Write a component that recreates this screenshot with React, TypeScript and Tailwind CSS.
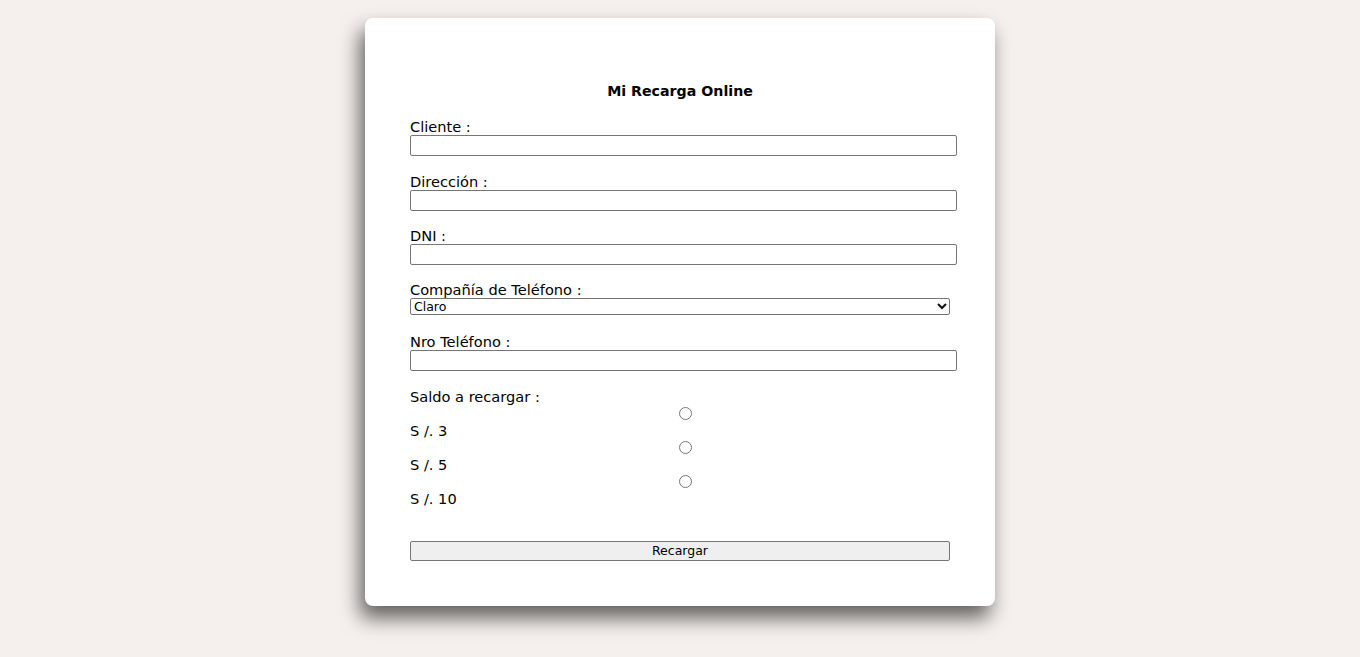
import React from "react";

const labelCls = "block h-[17px] leading-[17px]";
const inputCls = "block h-[21px] w-[547px] border border-[#767676] rounded-[2px] bg-white px-[2px]";

function Field({ label, className }: { label: string; className?: string }) {
  return (
    <div className={className}>
      <label className={labelCls}>{label}</label>
      <input type="text" className={inputCls} />
    </div>
  );
}

export default function App() {
  const amounts = ["S /. 3", "S /. 5", "S /. 10"];

  return (
    <div className="min-h-[657px] bg-[#f5f0ed] pt-[18px] font-['DejaVu_Sans',sans-serif] text-[14.6px] text-black">
      <div className="mx-auto h-[588px] w-[630px] rounded-lg bg-white px-[45px] pt-[64px] shadow-[-5px_12px_20px_rgba(0,0,0,0.6)]">
        <h1 className="h-[18px] text-center text-[14.2px] font-bold leading-[18px]">Mi Recarga Online</h1>

        <Field label="Cliente :" className="mt-[18px]" />
        <Field label="Dirección :" className="mt-[17px]" />
        <Field label="DNI :" className="mt-[16px]" />

        <div className="mt-[16px]">
          <label className={labelCls}>Compañía de Teléfono :</label>
          <div className="relative w-[540px]">
            <select className="block h-[17px] w-[540px] appearance-none rounded-[2px] border border-[#767676] bg-white pl-[3px] font-['DejaVu_Sans',sans-serif] text-[12.5px] leading-[15px]">
              <option>Claro</option>
              <option>Movistar</option>
              <option>Entel</option>
              <option>Bitel</option>
            </select>
            <svg
              className="pointer-events-none absolute right-[3px] top-[4px]"
              width="10"
              height="8"
              viewBox="0 0 10 8"
            >
              <path d="M1 2 L5 6 L9 2" fill="none" stroke="#111" strokeWidth="2" />
            </svg>
          </div>
        </div>

        <Field label="Nro Teléfono :" className="mt-[18px]" />

        <div className="mt-[17px]">
          <label className={labelCls}>Saldo a recargar :</label>
          {amounts.map((a) => (
            <div key={a}>
              <div className="flex h-[17px] items-center justify-center pl-[10px]">
                <span className="block h-[13px] w-[13px] rounded-full border border-[#767676] bg-white" />
              </div>
              <label className={labelCls}>{a}</label>
            </div>
          ))}
        </div>

        <button className="mt-[34px] block h-[20px] w-[540px] rounded-[2px] border border-[#767676] bg-[#efefef] font-['DejaVu_Sans',sans-serif] text-[12.5px] leading-[18px]">
          Recargar
        </button>
      </div>
    </div>
  );
}
